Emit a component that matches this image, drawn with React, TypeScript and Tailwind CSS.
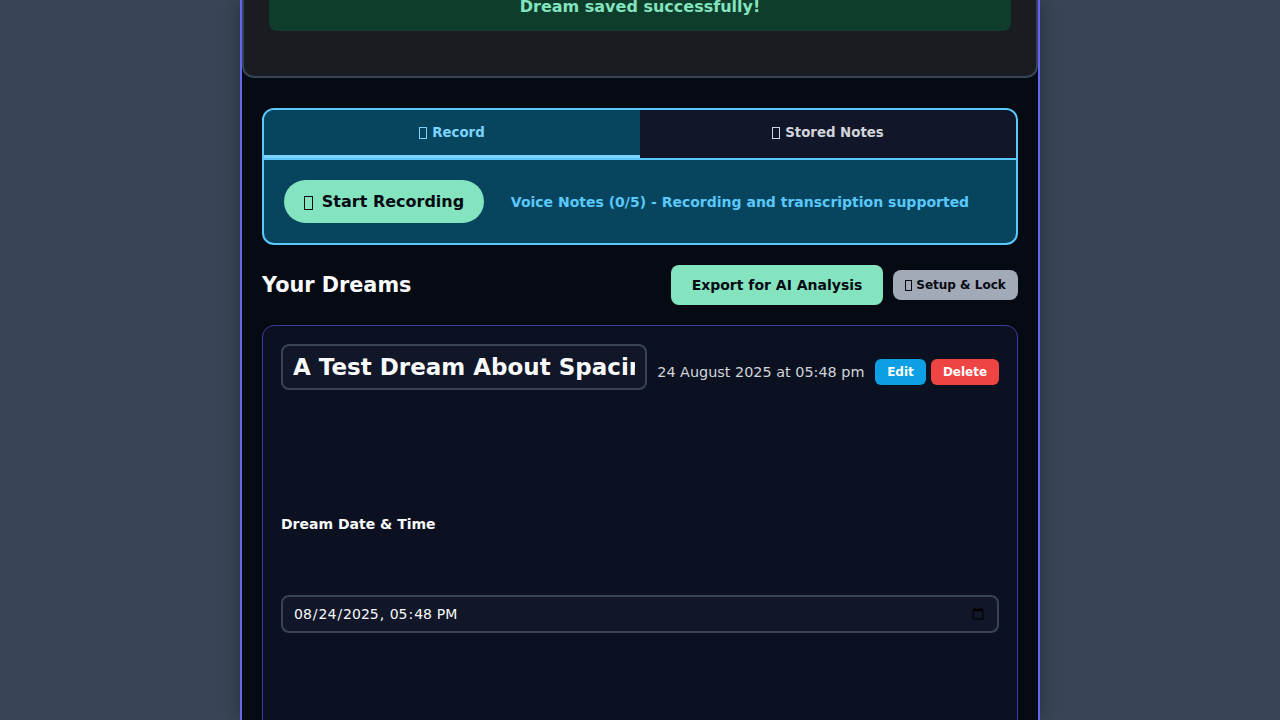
import React from 'react';

function Glyph({ className }: { className: string }) {
  return <span aria-hidden="true" className={`inline-block shrink-0 border border-current ${className}`} />;
}

function SavedBanner() {
  return (
    <section className="h-[78px] rounded-b-xl border-2 border-t-0 border-[#384454] bg-[#191c20] px-[25px]">
      <div className="flex h-[31px] items-end justify-center rounded-b-lg bg-[#0f3d2b] pb-[13px] text-base leading-[22px] font-bold text-[#83e4bf]">
        Dream saved successfully!
      </div>
    </section>
  );
}

function VoiceNotes() {
  return (
    <section className="mx-5 mt-[30px] h-[137px] overflow-hidden rounded-xl border-2 border-[#5ac8fa] bg-[#07455f]">
      <div className="flex h-[50px] border-b-2 border-[#5ac8fa] font-['Verdana','DejaVu_Sans',sans-serif] text-[13.333px] font-semibold">
        <button className="flex flex-1 items-center justify-center border-b-[3px] border-[#7dd3fc] bg-[#07455f] text-[#7dd3fc]">
          <Glyph className="mt-px mr-[5px] h-3 w-2" />
          Record
        </button>
        <button className="flex flex-1 items-center justify-center border-b-[3px] border-transparent bg-[#111728] text-[#d1d5db]">
          <Glyph className="mt-px mr-[5px] h-3 w-2" />
          Stored Notes
        </button>
      </div>
      <div className="flex items-center p-5">
        <button className="flex h-[43px] w-[200px] items-center justify-center rounded-full bg-[#83e4bf] text-base font-bold text-[#060a12]">
          <Glyph className="mt-[3px] mr-[9px] h-3.5 w-[9px]" />
          Start Recording
        </button>
        <p className="flex-1 text-center text-sm font-bold text-[#5ac8fa]">
          Voice Notes (0/5) - Recording and transcription supported
        </p>
      </div>
    </section>
  );
}

function DreamEntry() {
  return (
    <article className="mx-5 mt-5 h-[600px] rounded-xl border border-[#3b3d9a] bg-[#0b1120] px-[18px] pt-[18px]">
      <div className="flex h-[46px] items-center">
        <input
          className="h-[46px] w-[366px] rounded-lg border-2 border-[#384454] bg-[#111728] px-[10px] text-[23px] font-bold text-[#f9fafb]"
          defaultValue="A Test Dream About Spacing"
        />
        <div className="ml-auto flex items-center pt-[10px] whitespace-nowrap">
          <span className="mr-[10.5px] pt-0.5 text-[14.4px] text-[#d1d5db]">24 August 2025 at 05:48 pm</span>
          <button className="mr-[5px] h-[26px] w-[51px] rounded-md bg-[#0c9fe4] font-['Verdana','DejaVu_Sans',sans-serif] text-xs font-semibold text-white">
            Edit
          </button>
          <button className="h-[26px] w-[68px] rounded-md bg-[#ef4444] font-['Verdana','DejaVu_Sans',sans-serif] text-xs font-semibold text-white">
            Delete
          </button>
        </div>
      </div>
      <label className="mt-[124px] block h-[81px] text-sm leading-5 font-bold text-[#f9fafb]">Dream Date &amp; Time</label>
      <input
        type="datetime-local"
        className="h-[38px] w-full rounded-lg border-2 border-[#384454] bg-[#111728] px-[10px] text-sm text-[#f9fafb]"
        defaultValue="2025-08-24T17:48"
      />
    </article>
  );
}

export default function App() {
  return (
    <div className="h-[720px] overflow-hidden bg-[#394556] font-['DejaVu_Sans',sans-serif]">
      <main className="mx-auto h-[720px] w-[800px] overflow-hidden border-x-2 border-[#6366f1] bg-[#060a12] shadow-[0_0_20px_rgba(0,0,0,0.3)]">
        <SavedBanner />
        <VoiceNotes />
        <header className="mx-5 mt-5 flex h-10 items-center">
          <h2 className="mr-auto pt-0.5 text-[20.8px] font-bold text-[#f9fafb]">Your Dreams</h2>
          <button className="mr-[10px] h-10 w-[212px] rounded-lg bg-[#83e4bf] font-['Verdana','DejaVu_Sans',sans-serif] text-sm font-semibold text-[#060a12]">
            Export for AI Analysis
          </button>
          <button className="flex h-[30px] w-[125px] items-center justify-center rounded-lg bg-[#a2a9b7] font-['Verdana','DejaVu_Sans',sans-serif] text-xs font-semibold text-[#060a12]">
            <Glyph className="mt-px mr-[4px] h-[11px] w-[7px]" />
            Setup &amp; Lock
          </button>
        </header>
        <DreamEntry />
      </main>
    </div>
  );
}
